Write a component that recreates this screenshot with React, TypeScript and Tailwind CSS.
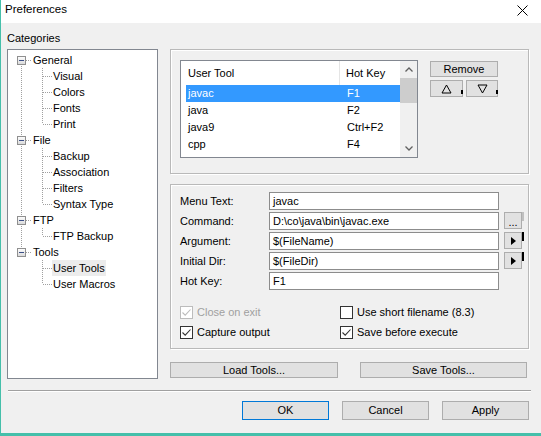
import React from "react";

type Node = { label: string; kind: "parent" | "child"; first?: boolean; last?: boolean; parentLast?: boolean; selected?: boolean };

const tree: Node[] = [
  { label: "General", kind: "parent", first: true },
  { label: "Visual", kind: "child" },
  { label: "Colors", kind: "child" },
  { label: "Fonts", kind: "child" },
  { label: "Print", kind: "child", last: true },
  { label: "File", kind: "parent" },
  { label: "Backup", kind: "child" },
  { label: "Association", kind: "child" },
  { label: "Filters", kind: "child" },
  { label: "Syntax Type", kind: "child", last: true },
  { label: "FTP", kind: "parent" },
  { label: "FTP Backup", kind: "child", last: true },
  { label: "Tools", kind: "parent", last: true },
  { label: "User Tools", kind: "child", parentLast: true, selected: true },
  { label: "User Macros", kind: "child", parentLast: true, last: true },
];

const tools = [
  { name: "javac", key: "F1" },
  { name: "java", key: "F2" },
  { name: "java9", key: "Ctrl+F2" },
  { name: "cpp", key: "F4" },
];

const dot = { stroke: "#a0a0a0", strokeDasharray: "1 1", shapeRendering: "crispEdges" as const };

function TreeLines({ n }: { n: Node }) {
  if (n.kind === "parent") {
    return (
      <svg width="24" height="16" className="shrink-0">
        <line x1="13.5" y1={n.first ? 8 : 0} x2="13.5" y2={n.last ? 8 : 16} {...dot} />
        <line x1="18" y1="8.5" x2="24" y2="8.5" {...dot} />
        <defs>
          <linearGradient id="exp" x1="0" y1="0" x2="0" y2="1">
            <stop offset="0" stopColor="#ffffff" />
            <stop offset="1" stopColor="#d8d8d8" />
          </linearGradient>
        </defs>
        <rect x="9.5" y="4.5" width="8" height="8" fill="url(#exp)" stroke="#8f8f8f" shapeRendering="crispEdges" />
        <rect x="11" y="8" width="5" height="1" fill="#3b4f86" />
      </svg>
    );
  }
  return (
    <svg width="44" height="16" className="shrink-0">
      {!n.parentLast && <line x1="13.5" y1="0" x2="13.5" y2="16" {...dot} />}
      <line x1="34.5" y1="0" x2="34.5" y2={n.last ? 8 : 16} {...dot} />
      <line x1="35" y1="8.5" x2="44" y2="8.5" {...dot} />
    </svg>
  );
}

function Btn({ className = "", children }: { className?: string; children?: React.ReactNode }) {
  return (
    <div className={`flex items-center justify-center bg-[#e1e1e1] border border-[#adadad] ${className}`}>
      {children}
    </div>
  );
}

function Check({ checked, disabled, label }: { checked: boolean; disabled?: boolean; label: string }) {
  const c = disabled ? "#bcbcbc" : "#333333";
  return (
    <div className="flex items-center h-[13px]">
      <div className={`w-[13px] h-[13px] bg-white border flex items-center justify-center ${disabled ? "border-[#bcbcbc]" : "border-[#333333]"}`}>
        {checked && (
          <svg width="11" height="11" viewBox="0 0 11 11">
            <path d="M1.5 5.5 L4.2 8.2 L9.5 2.5" fill="none" stroke={c} strokeWidth="1.1" />
          </svg>
        )}
      </div>
      <span className={`ml-[4px] ${disabled ? "text-[#a0a0a0]" : ""}`}>{label}</span>
    </div>
  );
}

function Field({ label, value, side }: { label: string; value: string; side?: "dots" | "arrow" }) {
  return (
    <div className="flex items-center h-[18px]">
      <div className="w-[89px]">{label}</div>
      <div className="w-[230px] h-[18px] bg-white border border-[#8c8c8c] px-[3px] flex items-center">{value}</div>
      {side && (
        <div className="flex ml-[5px] h-[17px] self-start">
          <Btn className="w-[18px] h-[17px]">
            {side === "dots" ? (
              <span className="leading-none pt-[4px]">...</span>
            ) : (
              <svg width="5" height="8" viewBox="0 0 5 8">
                <path d="M0 0 L5 4 L0 8 Z" fill="#000" />
              </svg>
            )}
          </Btn>
          <div className={`w-[2px] h-[9px] ${side === "dots" ? "bg-[#c0c0c0]" : "bg-black"}`} />
        </div>
      )}
    </div>
  );
}

const etched = "border border-[#b9b9b9] shadow-[inset_1px_1px_0_#ffffff,1px_1px_0_#ffffff]";

export default function App() {
  return (
    <div className="w-[541px] h-[436px] overflow-hidden bg-[#f0f0f0] border-l border-b-[3px] border-[#45bfaa] flex flex-col font-['Liberation_Sans',Arial,sans-serif] text-[11px] text-black">
      {/* title bar */}
      <div className="h-[23px] bg-white flex items-center justify-between pl-[4px] pr-[13px] pb-[3px] shrink-0">
        <span className="text-[11.5px]">Preferences</span>
        <svg width="11" height="11" viewBox="0 0 11 11">
          <path d="M0.5 0.5 L10.5 10.5 M10.5 0.5 L0.5 10.5" stroke="#000" strokeWidth="1" />
        </svg>
      </div>

      <div className="flex pl-[6px]">
        {/* categories */}
        <div className="w-[151px] flex flex-col">
          <div className="mt-[8px] mb-[4px] h-[14px] leading-[14px]">Categories</div>
          <div className="h-[330px] bg-white border border-[#828790] pt-[2px]">
            {tree.map((n) => (
              <div key={n.label} className="flex h-[16px] items-center">
                <TreeLines n={n} />
                <span className={`h-[16px] leading-[16px] px-[1px] ${n.selected ? "bg-[#ececec]" : ""}`}>{n.label}</span>
              </div>
            ))}
          </div>
        </div>

        {/* right side */}
        <div className="ml-[12px] w-[359px] pt-[26px] flex flex-col">
          <div className={`h-[125px] ${etched} pl-[9px] pt-[10px] flex`}>
            <div className="w-[238px] h-[98px] bg-white border border-[#828790] flex">
              <div className="flex-1 flex flex-col">
                <div className="h-[24px] flex">
                  <div className="w-[159px] pl-[7px] border-r border-[#e5e5e5] flex items-center">User Tool</div>
                  <div className="pl-[6px] flex items-center">Hot Key</div>
                </div>
                {tools.map((t, i) => (
                  <div key={t.name} className={`ml-[5px] h-[17px] flex items-center ${i === 0 ? "bg-[#3399ff] text-white" : ""}`}>
                    <div className="w-[154px] pl-[2px]">{t.name}</div>
                    <div className="pl-[7px]">{t.key}</div>
                  </div>
                ))}
              </div>
              <div className="w-[17px] bg-[#f0f0f0] flex flex-col">
                <div className="h-[17px] flex items-center justify-center">
                  <svg width="8" height="5" viewBox="0 0 8 5">
                    <path d="M0.5 4.5 L4 1 L7.5 4.5" fill="none" stroke="#606060" strokeWidth="1.3" />
                  </svg>
                </div>
                <div className="h-[25px] bg-[#cdcdcd]" />
                <div className="flex-1" />
                <div className="h-[17px] flex items-center justify-center">
                  <svg width="8" height="5" viewBox="0 0 8 5">
                    <path d="M0.5 0.5 L4 4 L7.5 0.5" fill="none" stroke="#606060" strokeWidth="1.3" />
                  </svg>
                </div>
              </div>
            </div>
            <div className="ml-[12px] pt-[1px] flex flex-col">
              <Btn className="w-[68px] h-[16px]">Remove</Btn>
              <div className="flex gap-[3px] mt-[3px]">
                <Btn className="relative w-[33px] h-[17px]">
                  <svg width="11" height="10" viewBox="0 0 11 10">
                    <path d="M5.5 1 L10 9 L1 9 Z" fill="none" stroke="#000" strokeWidth="1" />
                  </svg>
                  <span className="absolute right-[-1px] top-[9px] w-[2px] h-[4px] bg-black" />
                </Btn>
                <Btn className="relative w-[32px] h-[17px]">
                  <svg width="11" height="10" viewBox="0 0 11 10">
                    <path d="M1 1 L10 1 L5.5 9 Z" fill="none" stroke="#000" strokeWidth="1" />
                  </svg>
                  <span className="absolute right-[-1px] top-[9px] w-[2px] h-[4px] bg-black" />
                </Btn>
              </div>
            </div>
          </div>

          <div className={`mt-[10px] h-[165px] ${etched} pl-[9px] pt-[7px] flex flex-col`}>
            <div className="flex flex-col gap-[2px]">
              <Field label="Menu Text:" value="javac" />
              <Field label="Command:" value={"D:\\co\\java\\bin\\javac.exe"} side="dots" />
              <Field label="Argument:" value="$(FileName)" side="arrow" />
              <Field label="Initial Dir:" value="$(FileDir)" side="arrow" />
              <Field label="Hot Key:" value="F1" />
            </div>
            <div className="mt-[16px] grid grid-cols-[160px_1fr] gap-y-[7px]">
              <Check checked disabled label="Close on exit" />
              <Check checked={false} label="Use short filename (8.3)" />
              <Check checked label="Capture output" />
              <Check checked label="Save before execute" />
            </div>
          </div>

          <div className="mt-[13px] flex">
            <Btn className="w-[168px] h-[16px]">Load Tools...</Btn>
            <Btn className="ml-[22px] w-[167px] h-[16px]">Save Tools...</Btn>
          </div>
        </div>
      </div>

      <div className="mt-[11px] ml-[7px] w-[523px] h-[2px] border-t border-[#a0a0a0] border-b border-b-white" />

      <div className="mt-[9px] flex justify-end gap-[13px] pr-[12px]">
        <Btn className="w-[87px] h-[19px] !border-[#0078d7]">OK</Btn>
        <Btn className="w-[87px] h-[19px]">Cancel</Btn>
        <Btn className="w-[87px] h-[19px]">Apply</Btn>
      </div>
    </div>
  );
}
